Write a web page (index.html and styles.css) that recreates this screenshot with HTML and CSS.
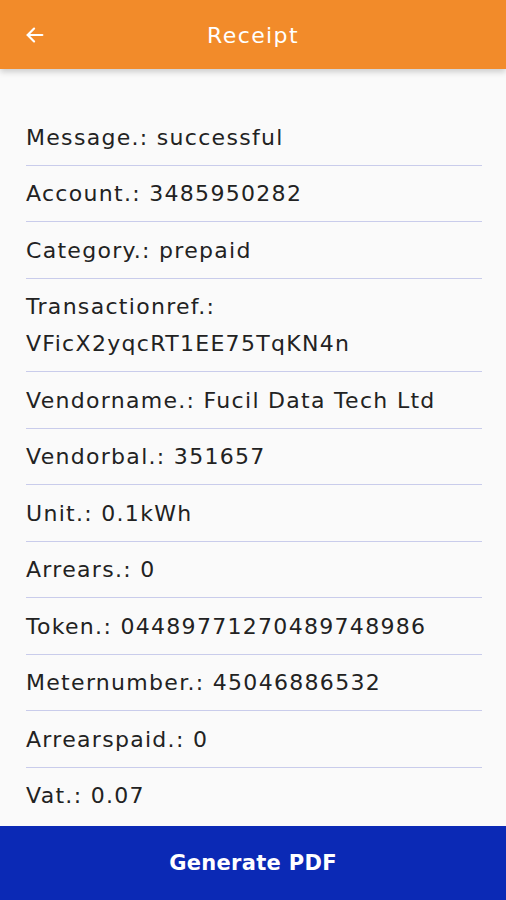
FILE: index.html
```html
<!DOCTYPE html>
<html lang="en">
<head>
    <meta charset="UTF-8">
    <meta name="viewport" content="width=device-width, initial-scale=1.0">
    <title>Receipt</title>
    <link rel="stylesheet" href="styles.css">
</head>
<body>
    <header class="topbar">
        <button class="back" aria-label="Back">
            <svg width="22" height="22" viewBox="0 0 24 24" fill="none" stroke="#fff" stroke-width="2.4" stroke-linecap="round" stroke-linejoin="round">
                <path d="M20 12H4"/>
                <path d="M11 5l-7 7 7 7"/>
            </svg>
        </button>
        <h1>Receipt</h1>
    </header>

    <main class="receipt">
        <div class="row">Message.: successful</div>
        <div class="row">Account.: 3485950282</div>
        <div class="row">Category.: prepaid</div>
        <div class="row">Transactionref.:<br>VFicX2yqcRT1EE75TqKN4n</div>
        <div class="row">Vendorname.: Fucil Data Tech Ltd</div>
        <div class="row">Vendorbal.: 351657</div>
        <div class="row">Unit.: 0.1kWh</div>
        <div class="row">Arrears.: 0</div>
        <div class="row">Token.: 04489771270489748986</div>
        <div class="row">Meternumber.: 45046886532</div>
        <div class="row">Arrearspaid.: 0</div>
        <div class="row">Vat.: 0.07</div>
    </main>

    <button class="generate">Generate PDF</button>
</body>
</html>
```

FILE: styles.css
```css
body {
    margin: 0;
    padding: 0;
    background-color: #fafafa;
    font-family: "DejaVu Sans", sans-serif;
    color: #222;
    height: 900px;
    display: flex;
    flex-direction: column;
    overflow: hidden;
}
.topbar {
    height: 69px;
    background-color: #f28b2a;
    box-shadow: 0 3px 6px rgba(0, 0, 0, 0.18);
    display: flex;
    align-items: center;
    justify-content: center;
    position: relative;
    flex-shrink: 0;
}
.topbar h1 {
    margin: 0 0 -2px;
    font-size: 22px;
    font-weight: normal;
    letter-spacing: 1.4px;
    color: #fff;
}
.back {
    position: absolute;
    left: 24px;
    top: 24px;
    background: none;
    border: none;
    padding: 0;
    display: flex;
}
.receipt {
    height: 735px;
    overflow: hidden;
    padding: 40px 24px 0 26px;
    box-sizing: border-box;
    flex-shrink: 0;
}
.row {
    font-size: 22px;
    line-height: 37px;
    letter-spacing: 1.3px;
    padding: 9.5px 0 9px;
    border-bottom: 1px solid #c9cceb;
}
.generate {
    margin-top: auto;
    height: 74px;
    flex-shrink: 0;
    border: none;
    background-color: #0b29b5;
    color: #fff;
    font-family: inherit;
    font-size: 21px;
    font-weight: bold;
    letter-spacing: 0.3px;
}
```
